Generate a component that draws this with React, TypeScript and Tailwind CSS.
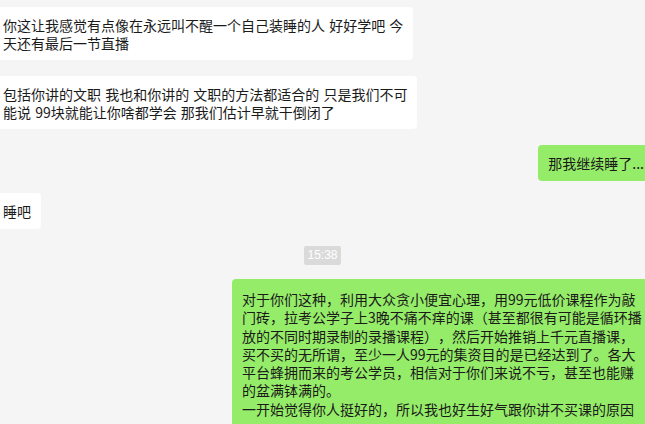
import React from 'react';

type Line = string;

function LeftBubble({ lines, className = '' }: { lines: Line[]; className?: string }) {
    return (
        <div className={`self-start rounded-[4px] bg-white pl-[12px] pr-[10px] [word-spacing:1px] ${className}`}>
            {lines.map((l, i) => (
                <div key={i} className="whitespace-nowrap">{l}</div>
            ))}
        </div>
    );
}

function RightBubble({ lines, className = '' }: { lines: Line[]; className?: string }) {
    return (
        <div className={`self-end rounded-[4px] bg-[#95ec69] px-[10px] ${className}`}>
            {lines.map((l, i) => (
                <div key={i} className="whitespace-nowrap">{l}</div>
            ))}
        </div>
    );
}

export default function App() {
    return (
        <div className="h-[424px] w-[645px] overflow-hidden bg-[#f5f5f5] font-['Noto_Sans_CJK_SC','Microsoft_YaHei',sans-serif] text-[14px] leading-[18px] text-[#1a1a1a] [text-spacing-trim:space-all]">
            <div className="-ml-[9px] flex w-[663px] flex-col pt-[7px]">
                {/* Incoming */}
                <LeftBubble
                    className="pt-[9px] pb-[8px]"
                    lines={[
                        '你这让我感觉有点像在永远叫不醒一个自己装睡的人 好好学吧 今',
                        '天还有最后一节直播',
                    ]}
                />
                <LeftBubble
                    className="mt-[16px] pt-[9px] pb-[8px]"
                    lines={[
                        '包括你讲的文职 我也和你讲的 文职的方法都适合的 只是我们不可',
                        '能说 99块就能让你啥都学会 那我们估计早就干倒闭了',
                    ]}
                />

                {/* Outgoing */}
                <RightBubble className="mt-[16px] py-[9px]" lines={['那我继续睡了...']} />

                <LeftBubble className="mt-[12px] py-[9px] pr-[9px]" lines={['睡吧']} />

                {/* Time stamp */}
                <div className="mt-[17px] self-center rounded-[2px] bg-[#dadada] px-[3px] font-['Liberation_Sans',sans-serif] text-[12px] leading-[19px] text-white">
                    15:38
                </div>

                <div className="mt-[14px] w-[422px] self-end rounded-[4px] bg-[#95ec69] pl-[10px] pt-[11px] pb-[20px] leading-[18.3px]">
                    {[
                        '对于你们这种，利用大众贪小便宜心理，用99元低价课程作为敲',
                        '门砖，拉考公学子上3晚不痛不痒的课（甚至都很有可能是循环播',
                        '放的不同时期录制的录播课程），然后开始推销上千元直播课，',
                        '买不买的无所谓，至少一人99元的集资目的是已经达到了。各大',
                        '平台蜂拥而来的考公学员，相信对于你们来说不亏，甚至也能赚',
                        '的盆满钵满的。',
                        '一开始觉得你人挺好的，所以我也好生好气跟你讲不买课的原因',
                    ].map((l, i) => (
                        <div key={i} className="whitespace-nowrap">{l}</div>
                    ))}
                </div>
            </div>
        </div>
    );
}
